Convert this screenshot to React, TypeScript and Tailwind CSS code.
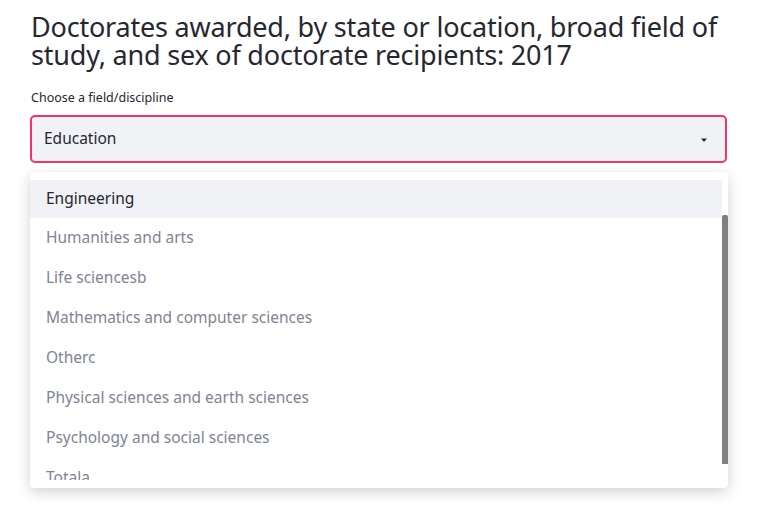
const fields = [
    'Engineering',
    'Humanities and arts',
    'Life sciencesb',
    'Mathematics and computer sciences',
    'Otherc',
    'Physical sciences and earth sciences',
    'Psychology and social sciences',
    'Totala',
];

export default function App() {
    const selected = 'Engineering';

    return (
        <div className="min-h-screen bg-white text-[#262730] font-['Noto_Sans',sans-serif]">
            <div className="pl-[31px] pr-[30px] pt-[13px]">
                <h1 className="text-[27px] leading-[28px] tracking-[-0.2px] font-normal">
                    Doctorates awarded, by state or location, broad field of study, and sex of doctorate recipients: 2017
                </h1>

                <label className="block mt-[20px] text-[12.5px] leading-[18px]">Choose a field/discipline</label>

                <div className="-ml-px mt-[8px] w-[697px]">
                    <div className="h-[48px] flex items-center justify-between rounded-[5px] border-2 border-[#f63366] bg-[#f0f2f6] pl-[12px] pr-[17px]">
                        <span className="text-[15.5px]">Education</span>
                        <svg width="8" height="5" viewBox="0 0 8 5" className="mt-[2px]">
                            <path d="M1 0.5h6L4 4z" fill="#262730" />
                        </svg>
                    </div>

                    <div className="relative mt-[9px] w-[698px] h-[316px] rounded-[4px] bg-white shadow-[0_4px_14px_rgba(0,0,0,0.18)] py-[8px] overflow-hidden">
                        <div className="h-[300px] overflow-hidden pr-[6px]">
                            {fields.map((field) => (
                                <div
                                    key={field}
                                    className={`flex items-center pl-[16px] text-[15.5px] ${field === selected ? 'h-[38px] bg-[#f0f2f6] text-[#262730]' : 'h-[40px] text-[#808495]'}`}
                                >
                                    {field}
                                </div>
                            ))}
                        </div>
                        <div className="absolute right-0 top-[43px] w-[6px] h-[249px] rounded-t-[2px] bg-[#808080]" />
                    </div>
                </div>
            </div>
        </div>
    );
}
